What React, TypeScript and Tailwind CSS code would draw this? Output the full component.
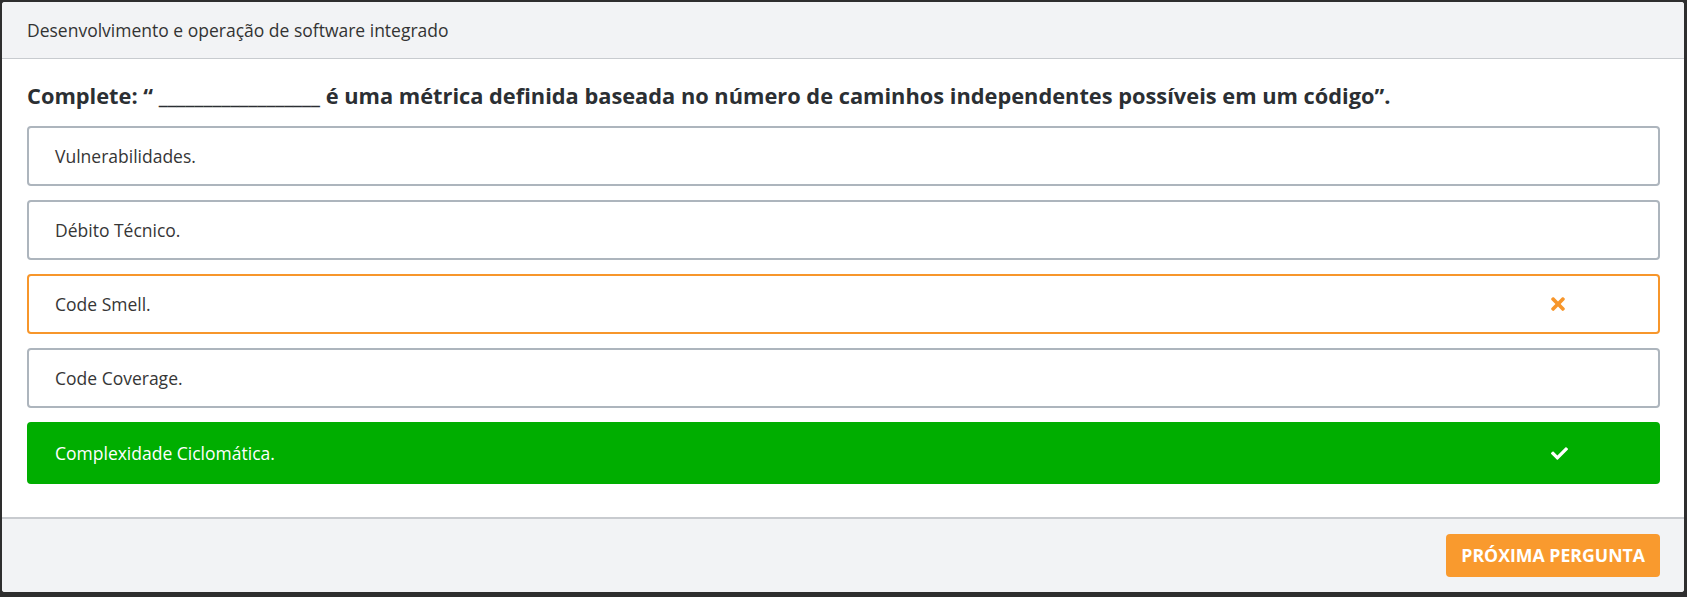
import React from 'react';
import { FaTimes, FaCheck } from 'react-icons/fa';

type Status = 'neutral' | 'wrong' | 'correct';

interface Option {
  label: string;
  status: Status;
}

const options: Option[] = [
  { label: 'Vulnerabilidades.', status: 'neutral' },
  { label: 'Débito Técnico.', status: 'neutral' },
  { label: 'Code Smell.', status: 'wrong' },
  { label: 'Code Coverage.', status: 'neutral' },
  { label: 'Complexidade Ciclomática.', status: 'correct' },
];

const OptionRow: React.FC<{ option: Option }> = ({ option }) => {
  const base = 'flex items-center rounded-[4px] pl-[26px] pr-[90px] text-[17.5px]';
  const styles: Record<Status, string> = {
    neutral: 'h-[60px] border-2 border-[#adb5bd] bg-white text-[#363636]',
    wrong: 'h-[60px] border-2 border-[#f7962b] bg-white text-[#363636]',
    correct: 'h-[62px] border-2 border-[#00ae00] bg-[#00ae00] text-white',
  };

  return (
    <div className={`${base} ${styles[option.status]}`}>
      <span className="flex-1">{option.label}</span>
      {option.status === 'wrong' && <FaTimes size={20} className="text-[#f7962b]" />}
      {option.status === 'correct' && <FaCheck size={17} className="text-white" />}
    </div>
  );
};

const App: React.FC = () => {
  return (
    <div
      className="w-[1687px] h-[597px] bg-[#2e2e2e] pt-[2px] pl-[2px]"
      style={{ fontFamily: '"Open Sans", "Noto Sans", sans-serif' }}
    >
      <div className="w-[1682px] h-[590px] bg-white rounded-[3px] overflow-hidden flex flex-col">
        {/* Header */}
        <div className="h-[57px] shrink-0 bg-[#f2f3f5] border-b border-[#c8cbcf] flex items-center pl-[25px]">
          <span className="text-[17.5px] text-[#333]">Desenvolvimento e operação de software integrado</span>
        </div>

        {/* Body */}
        <div className="flex-1 pl-[25px] pr-[24px] pt-[23px]">
          <h2 className="text-[21.8px] leading-[28px] font-bold text-[#2b2f33] mb-[16px]">
            Complete: “ __________________ é uma métrica definida baseada no número de caminhos independentes possíveis em um código”.
          </h2>
          <div className="flex flex-col gap-[14px]">
            {options.map((o) => (
              <OptionRow key={o.label} option={o} />
            ))}
          </div>
        </div>

        {/* Footer */}
        <div className="h-[75px] shrink-0 bg-[#f2f3f5] border-t-2 border-[#c8cbcf] flex items-center justify-end pr-[24px]">
          <button className="h-[43px] px-[15px] rounded-[4px] bg-[#f99a2e] text-white font-bold text-[17.7px] uppercase">
            Próxima pergunta
          </button>
        </div>
      </div>
    </div>
  );
};

export default App;
